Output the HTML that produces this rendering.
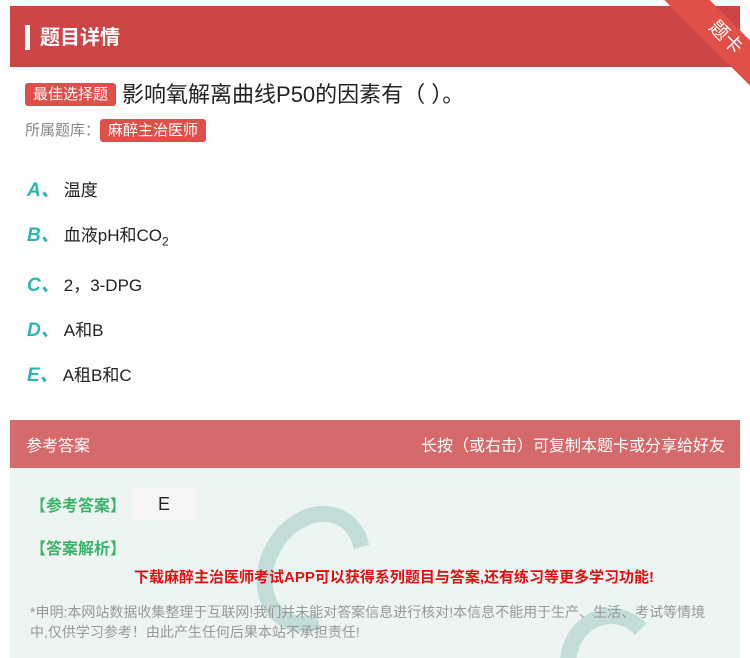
<!DOCTYPE html>
<html><head><meta charset="utf-8"><style>
html{width:750px;height:658px;overflow:hidden}
body{margin:0;width:750px;height:658px;overflow:hidden;background:#fff;font-family:"Liberation Sans","Noto Sans CJK SC",sans-serif;position:relative}
.hdr{position:absolute;left:10px;top:6px;width:730px;height:61px;background:#cc4646}
.hdr .bar{position:absolute;left:15px;top:19px;width:5px;height:25px;background:#fff}
.hdr .t{position:absolute;left:30px;top:15px;color:#fff;font-size:20px;font-weight:bold}
.tag{display:inline-block;background:#e0504a;color:#fff;border-radius:3px;font-size:15px;padding:0 8px;height:23px;line-height:23px}
.q{position:absolute;left:25px;top:77px;font-size:22px;color:#222}
.q .tag{vertical-align:3px;margin-right:6px}
.src{position:absolute;left:25px;top:119px;font-size:15px;color:#888}
.opt{position:absolute;left:27px;font-size:17px;color:#222}
.opt b{color:#2fb5b0;font-style:italic;font-size:19px;margin-right:4px}
.ans{position:absolute;left:10px;top:420px;width:730px;height:48px;background:#d46a6a;color:#fff;font-size:16px}
.body{position:absolute;left:10px;top:468px;width:730px;height:190px;background:#edf5f3;overflow:hidden}
.g{color:#3bb36a;font-size:16px;font-weight:bold;position:absolute}
</style></head><body>
<div class="hdr"><div class="bar"></div><div class="t">题目详情</div></div>
<div style="position:absolute;right:0;top:0;width:100px;height:95px;overflow:hidden"><div style="position:absolute;left:5px;top:22px;width:140px;height:32px;background:#e05048;transform:rotate(45deg);color:#fff;font-size:19px;line-height:32px;text-align:center">题卡</div></div>
<div class="q"><span class="tag">最佳选择题</span>影响氧解离曲线P50的因素有（ ）。</div>
<div class="src">所属题库：<span class="tag">麻醉主治医师</span></div>
<div class="opt" style="top:175px"><b>A、</b>温度</div>
<div class="opt" style="top:220px"><b>B、</b>血液pH和CO<sub style="font-size:12px">2</sub></div>
<div class="opt" style="top:270px"><b>C、</b>2，3-DPG</div>
<div class="opt" style="top:315px"><b>D、</b>A和B</div>
<div class="opt" style="top:360px"><b>E、</b>A租B和C</div>
<div class="ans"><span style="position:absolute;left:16px;top:12px">参考答案</span><span style="position:absolute;right:15px;top:12px">长按（或右击）可复制本题卡或分享给好友</span></div>
<div class="body">
<div style="position:absolute;left:250px;top:35px;width:75px;height:100px;border-radius:50%;border:16px solid #b9d8d2;border-right-color:transparent;opacity:.8;transform:rotate(30deg)"></div>
<div style="position:absolute;left:550px;top:140px;width:70px;height:80px;border-radius:50%;border:16px solid #b9d8d2;border-right-color:transparent;opacity:.8"></div>
<div class="g" style="left:20px;top:24px">【参考答案】</div>
<div style="position:absolute;left:122px;top:20px;width:64px;height:32px;background:#f5f5f5;font-size:18px;text-align:center;line-height:32px;color:#222">E</div>
<div class="g" style="left:20px;top:67px">【答案解析】</div>
<div style="position:absolute;left:124px;top:98px;color:#e01010;font-size:15px;font-weight:bold">下载麻醉主治医师考试APP可以获得系列题目与答案,还有练习等更多学习功能!</div>
<div style="position:absolute;left:20px;top:134px;width:690px;color:#999;font-size:14px;line-height:20px">*申明:本网站数据收集整理于互联网!我们并未能对答案信息进行核对!本信息不能用于生产、生活、考试等情境中,仅供学习参考！由此产生任何后果本站不承担责任!</div>
</div>
</body></html>
